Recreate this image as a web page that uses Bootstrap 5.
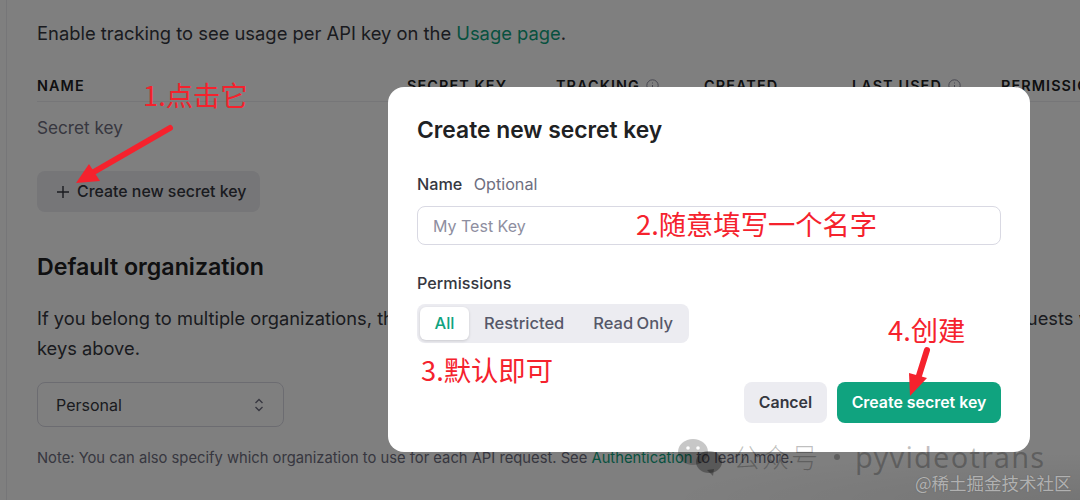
<!doctype html>
<html lang="en">
<head>
<meta charset="utf-8">
<title>API keys</title>
<link href="https://cdn.jsdelivr.net/npm/bootstrap@5.3.0/dist/css/bootstrap.min.css" rel="stylesheet">
<style>
html,body{width:1080px;height:500px;overflow:hidden;margin:0}
body{background:#fff;color:#202123;font-family:Inter,"Liberation Sans",sans-serif;position:relative}
.page-rail{width:7px;border-right:1px solid #ececf1;flex:none}
.page-main{padding:20px 0 0 30px;width:1073px;flex:none;overflow:hidden}
.intro{font-size:18.37px;line-height:26px;margin:0;color:#353740;white-space:nowrap}
.green{color:#10a37f;text-decoration:none}
.key-head{display:flex;margin-top:29px;border-bottom:1px solid #ececf1;height:27px;width:1043px;font-size:14.4px;font-weight:600;letter-spacing:1.1px;line-height:22px;white-space:nowrap;overflow:hidden}
.key-head>div{flex:none}
.c1{width:370px}.c2{width:149px}.c3{width:148px}.c4{width:148px}.c5{width:149px}
.info{display:inline-block;width:13px;height:13px;vertical-align:-1px;margin-left:6px}
.key-row{font-size:17.2px;color:#6e6e80;margin-top:13px;line-height:26px}
.add-btn{background:#ececf1;border:0;border-radius:8px;width:223px;height:41px;margin-top:30px;display:flex;align-items:center;padding:0 0 0 19px;font-size:15.9px;font-weight:500;color:#353740;gap:7px;white-space:nowrap}
.h-org{font-size:23.2px;font-weight:600;margin:39px 0 0;line-height:32px;color:#202123}
.org-text{font-size:18.3px;line-height:30px;color:#353740;margin:20px 0 0;width:1160px}
.org-select{width:247px;height:45px;border:1px solid #d9d9e3;border-radius:8px;margin-top:19px;display:flex;align-items:center;justify-content:space-between;padding:0 18px;font-size:16px;color:#353740}
.note{font-size:14.76px;line-height:22px;color:#6e6e80;margin-top:20px;white-space:nowrap}
.veil{position:absolute;inset:0;background:rgba(0,0,0,.5)}
.dialog{position:absolute;left:388px;top:87px;width:642px;height:365px;background:#fff;border-radius:16px;padding:26px 29px 29px;display:flex;flex-direction:column}
.d-title{font-size:22.8px;font-weight:600;line-height:34px;margin:0;color:#202123}
.d-label{font-size:16.2px;font-weight:500;color:#353740;line-height:24px;margin-top:25px}
.d-label span{color:#6e6e80;font-weight:400;margin-left:7px}
.d-input{display:block;width:100%;height:39px;margin-top:10px;border:1px solid #d9d9e3;border-radius:8px;padding:0 15px;font-size:16px;font-family:inherit;outline:0}
.d-input::placeholder{color:#8e8ea0}
.perm-label{margin-top:26px}
.seg{display:inline-flex;background:#ececf1;border-radius:8px;padding:3px;margin-top:9px;align-self:flex-start;height:39px;font-size:16.5px;font-weight:500;color:#565869;align-items:center}
.seg div{padding:0 15px;line-height:33px}
.seg .on{background:#fff;color:#10a37f;border-radius:6px;box-shadow:0 1px 3px rgba(0,0,0,.15);width:49px;padding:0;text-align:center}
.seg .last{padding:0 13px 0 14px;word-spacing:-1px}
.actions{margin-top:auto;display:flex;justify-content:flex-end;gap:10px}
.btn-x{border:0;border-radius:8px;height:41px;font-size:15.9px;font-weight:600;padding:0;font-family:inherit}
.btn-gray{background:#ececf1;color:#353740;width:83px}
.btn-teal{background:#10a37f;color:#fff;width:164px}
.note-red{position:absolute;color:#f5222d;font-family:"Noto Sans CJK SC",sans-serif;font-size:27.3px;line-height:36px;white-space:nowrap}
.n1{left:143px;top:76px}.n2{left:636px;top:205px}.n3{left:421px;top:351px}.n4{left:888px;top:311px}
.arrows{position:absolute;left:0;top:0;pointer-events:none}
.shade{position:absolute;right:0;bottom:0;width:420px;height:48px;background:radial-gradient(ellipse at 100% 100%,rgba(0,0,0,.08),rgba(0,0,0,0) 70%)}
.wm{position:absolute;left:733px;top:438px;display:flex;align-items:center;height:38px;color:rgba(0,0,0,.25);white-space:nowrap;font-size:28px;line-height:38px;font-family:"Noto Sans","Noto Sans CJK SC",sans-serif}
.wm-cn{width:85px;font-family:"Noto Sans CJK SC",sans-serif;font-size:27px;letter-spacing:2px;font-weight:300}
.wm-dot{width:6px;height:6px;border-radius:50%;background:rgba(0,0,0,.25);margin:0 15px 0 16px}
.wm-en{font-size:29px;letter-spacing:1.2px}
.wm-icon{position:absolute;left:676px;top:437px}
.jj{position:absolute;left:915px;top:471px;font-size:17.5px;line-height:24px;color:rgba(205,205,205,.75);white-space:nowrap;font-family:"Noto Sans CJK SC",sans-serif;text-shadow:0 0 1px rgba(60,60,60,.5)}
</style>
</head>
<body>
<div class="d-flex h-100">
  <div class="page-rail"></div>
  <div class="page-main">
    <p class="intro">Enable tracking to see usage per API key on the <a class="green" href="#">Usage page</a>.</p>
    <div class="key-head">
      <div class="c1">NAME</div><div class="c2">SECRET KEY</div>
      <div class="c3">TRACKING<svg class="info" viewBox="0 0 13 13"><circle cx="6.5" cy="6.5" r="5.7" fill="none" stroke="#8e8ea0"/><path d="M6.5 6v3.5M6.5 3.500v1" stroke="#8e8ea0"/></svg></div>
      <div class="c4">CREATED</div>
      <div class="c5">LAST USED<svg class="info" viewBox="0 0 13 13"><circle cx="6.5" cy="6.5" r="5.7" fill="none" stroke="#8e8ea0"/><path d="M6.5 6v3.5M6.5 3.500v1" stroke="#8e8ea0"/></svg></div>
      <div>PERMISSIONS</div>
    </div>
    <div class="key-row">Secret key</div>
    <button class="add-btn" type="button"><svg width="14" height="14" viewBox="0 0 14 14"><path d="M7 1v12M1 7h12" stroke="#353740" stroke-width="1.4"/></svg>Create new secret key</button>
    <h2 class="h-org">Default organization</h2>
    <p class="org-text">If you belong to multiple organizations, this setting controls which organization is used by default when making requests with the API keys above.</p>
    <div class="org-select"><span>Personal</span><svg width="12" height="16" viewBox="0 0 12 16"><path d="M2.500 6 6 2.500 9.500 6M2.500 10 6 13.500 9.500 10" fill="none" stroke="#6e6e80" stroke-width="1.400"/></svg></div>
    <div class="note">Note: You can also specify which organization to use for each API request. See <a class="green" href="#">Authentication</a> to learn more.</div>
  </div>
</div>
<div class="veil"></div>
<div class="dialog">
  <h3 class="d-title">Create new secret key</h3>
  <div class="d-label">Name <span>Optional</span></div>
  <input class="d-input" type="text" placeholder="My Test Key">
  <div class="d-label perm-label">Permissions</div>
  <div class="seg"><div class="on">All</div><div>Restricted</div><div class="last">Read Only</div></div>
  <div class="actions">
    <button class="btn-x btn-gray" type="button">Cancel</button>
    <button class="btn-x btn-teal" type="button">Create secret key</button>
  </div>
</div>
<div class="note-red n1">1.点击它</div>
<div class="note-red n2">2.随意填写一个名字</div>
<div class="note-red n3">3.默认即可</div>
<div class="note-red n4">4.创建</div>
<svg class="arrows" width="1080" height="500" viewBox="0 0 1080 500">
  <path d="M170 128 92 173" stroke="#f5222d" stroke-width="6" stroke-linecap="round"/>
  <path d="M76 183 89 164 100 181Z" fill="#f5222d"/>
  <path d="M927 350 917 382" stroke="#f5222d" stroke-width="6" stroke-linecap="round"/>
  <path d="M909 373 927 378 910 396Z" fill="#f5222d"/>
</svg>
<div class="shade"></div>
<svg class="wm-icon" width="50" height="40" viewBox="0 0 50 40">
  <ellipse cx="17" cy="15" rx="15" ry="13" fill="rgba(0,0,0,.22)"/>
  <circle cx="12" cy="11" r="1.800" fill="#fff"/><circle cx="22" cy="11" r="1.800" fill="#fff"/>
  <ellipse cx="33" cy="25" rx="13" ry="11" fill="rgba(0,0,0,.3)"/>
  <path d="M31 33l6 6 1-7z" fill="rgba(0,0,0,.3)"/>
</svg>
<div class="wm"><span class="wm-cn">公众号</span><span class="wm-dot"></span><span class="wm-en">pyvideotrans</span></div>
<div class="jj">@稀土掘金技术社区</div>
</body>
</html>
